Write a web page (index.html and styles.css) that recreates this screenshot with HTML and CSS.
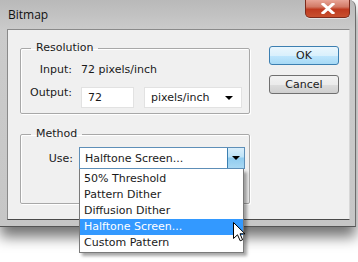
FILE: index.html
```html
<!DOCTYPE html>
<html>
<head>
<meta charset="utf-8">
<link rel="stylesheet" href="styles.css">
</head>
<body>
<div class="window">
  <div class="titlebar">
    <span class="title">Bitmap</span>
    <div class="close"><svg width="14" height="11" viewBox="0 0 14 11"><path d="M2 1 L12 10 M12 1 L2 10" stroke="#fff" stroke-width="3" stroke-linecap="square"/></svg></div>
  </div>
  <div class="client">
    <div class="left">
      <fieldset class="group res">
        <legend>Resolution</legend>
        <div class="grid">
          <span class="lbl">Input:</span><span class="val">72 pixels/inch</span>
          <span class="lbl">Output:</span>
          <div class="outrow">
            <div class="field">72</div>
            <div class="combo">pixels/inch<span class="arrow"></span></div>
          </div>
        </div>
      </fieldset>
      <fieldset class="group method">
        <legend>Method</legend>
        <div class="userow">
          <span class="lbl">Use:</span>
          <div class="select">
            <span class="seltext">Halftone Screen...</span>
            <span class="selbtn"><span class="arrow"></span></span>
            <ul class="list">
              <li>50% Threshold</li>
              <li>Pattern Dither</li>
              <li>Diffusion Dither</li>
              <li class="sel">Halftone Screen...</li>
              <li>Custom Pattern</li>
            </ul>
            <svg class="cursor" width="13" height="20" viewBox="0 0 13 20"><path d="M0.5 0.5 L0.5 16.5 L4.5 12.8 L7.2 18.8 L9.6 17.8 L7 11.8 L12 11.8 Z" fill="#fff" stroke="#000" stroke-width="1" stroke-linejoin="miter"/></svg>
          </div>
        </div>
      </fieldset>
    </div>
    <div class="buttons">
      <div class="btn ok">OK</div>
      <div class="btn">Cancel</div>
    </div>
  </div>
</div>
</body>
</html>
```
FILE: styles.css
```css
html, body { margin: 0; padding: 0; background: #fff; }
body { width: 358px; height: 262px; overflow: hidden; font-family: "DejaVu Sans", sans-serif; font-size: 11px; color: #1a1a1a; }
.window {
  width: 356px; height: 227px; box-sizing: border-box;
  padding: 0 5px 6px 7px;
  background: linear-gradient(180deg, #b9b9b9 0px, #cbcbcb 30px, #c6c6c6 100%);
  border-right: 1px solid #6d6d6d; border-bottom: 1px solid #555;
  border-radius: 0 7px 0 0;
  box-shadow: 0 10px 14px rgba(0,0,0,0.55);
  display: flex; flex-direction: column;
}
.titlebar { height: 29px; display: flex; align-items: flex-start; flex-shrink: 0; }
.title { font-family: "Open Sans", "DejaVu Sans", sans-serif; font-size: 12px; margin: 6px 0 0 1px; color: #111; }
.close {
  margin-left: auto; margin-right: 0px; width: 45px; height: 18px; box-sizing: border-box;
  background: linear-gradient(180deg, #e8a496 0%, #d27a66 40%, #bf3a1f 55%, #c8502f 100%);
  border: 1px solid #7c2a1b; border-top: none; border-radius: 0 0 5px 5px;
  display: flex; align-items: center; justify-content: center;
  box-shadow: 0 1px 0 rgba(255,255,255,0.5);
}
.client {
  flex: 1; background: #f0f0f0; border: 1px solid #8a8a8a; border-bottom-color: #4a4a4a; border-right-color: #d8d8d8;
  display: flex;
}
.left { padding-left: 12px; width: 230px; }
.group {
  margin: 0; padding: 0 0 0 0; border: 1px solid #a8a8a8; border-radius: 2px;
  box-shadow: inset 1px 1px 0 #fff, 1px 1px 0 #fff;
}
.group legend { line-height: 14px; padding: 0 5px; margin-left: 10px; }
.res { margin-top: 11px; padding-bottom: 5px; }
.method { margin-top: 13px; padding-bottom: 34px; }
.grid { display: grid; grid-template-columns: 51px auto; column-gap: 9px; align-items: center; }
.grid > .lbl:first-child, .grid > .lbl:first-child + .val { margin-top: 8px; line-height: 14px; }
.lbl { text-align: right; }
.outrow { display: flex; gap: 10px; margin-top: 10px; }
.grid > .lbl:nth-of-type(2) { margin-top: 10px; }
.field, .combo { height: 21px; box-sizing: border-box; background: #fff; border: 1px solid #e2e2e2; line-height: 19px; padding-left: 6px; }
.field { width: 53px; }
.combo { width: 98px; position: relative; }
.combo .arrow { position: absolute; right: 8px; top: 8px; }
.arrow { display: block; width: 0; height: 0; border-left: 4px solid transparent; border-right: 4px solid transparent; border-top: 4px solid #000; }
.userow { display: flex; align-items: center; margin-top: 6px; }
.userow .lbl { width: 51px; margin-right: 6px; margin-left: 1px; }
.select {
  position: relative; width: 166px; height: 22px; box-sizing: border-box;
  border: 1px solid #5e8fb8; background: #fff; display: flex; align-items: center;
}
.seltext { padding-left: 5px; flex: 1; }
.selbtn {
  width: 17px; height: 20px; box-sizing: border-box; border-left: 1px solid #3c7fb1;
  background: linear-gradient(180deg, #d9eefb 0%, #bde3f8 45%, #8fcbef 50%, #a8d8f3 100%);
  display: flex; align-items: center; justify-content: center;
}
.list {
  position: absolute; left: -1px; top: 21px; width: 165px; margin: 0; padding: 2px 0 1px; list-style: none;
  background: #fff; border: 1px solid #7a7a7a; border-top: none; box-sizing: border-box;
  box-shadow: 3px 3px 3px rgba(0,0,0,0.35);
}
.list li { height: 16px; line-height: 16px; padding-left: 4px; }
.list li.sel { background: #3399ff; color: #fff; }
.cursor { position: absolute; left: 153px; top: 74px; }
.buttons { margin-left: 19px; padding-top: 16px; display: flex; flex-direction: column; gap: 10px; }
.btn {
  width: 70px; height: 19px; box-sizing: border-box; border: 1px solid #707070; border-radius: 3px;
  background: linear-gradient(180deg, #f2f2f2 0%, #ebebeb 50%, #dddddd 51%, #cfcfcf 100%);
  text-align: center; line-height: 17px;
}
.btn.ok { border-color: #3c7fb1; background: linear-gradient(180deg, #eaf6fd 0%, #d9f0fc 50%, #bee6fd 51%, #a7d9f5 100%); }
```
